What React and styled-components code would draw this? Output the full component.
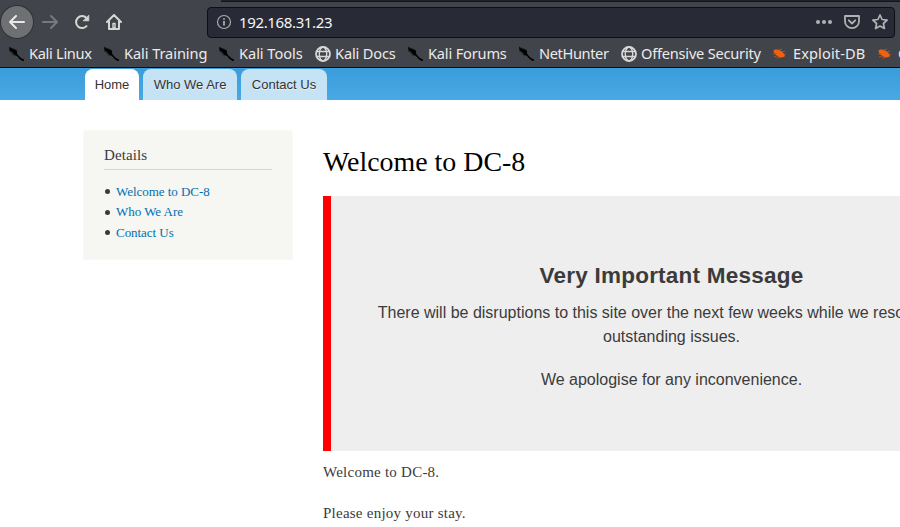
import React from "react";
import styled, { createGlobalStyle } from "styled-components";

const Global = createGlobalStyle`
  * { box-sizing: border-box; }
  html, body { margin: 0; height: 527px; overflow: hidden; background: #fff; }
`;

const Page = styled.div`
  width: 900px;
  height: 527px;
  overflow: hidden;
  background: #fff;
  color: #3b3b3b;
  font-family: "Liberation Serif", serif;
`;

const Chrome = styled.div`
  height: 68px;
  background: #42444b;
  border-bottom: 1px solid #0c0c0d;
  font-family: "Noto Sans", sans-serif;
  color: #ecebe9;
`;

const TabStrip = styled.div`
  height: 2px;
  margin-left: 221px;
  background: #20212b;
  border-bottom: 1px solid #15161c;
`;

const NavRow = styled.div`
  display: flex;
  height: 40px;
  padding: 0 5px 0 1px;
  align-items: center;
`;

const BackButton = styled.div`
  display: grid;
  place-items: center;
  width: 32px;
  height: 32px;
  border-radius: 50%;
  background: #6f7073;
  box-shadow: 0 0 0 1px #303136;
`;

const NavButton = styled.div`
  display: grid;
  place-items: center;
  width: 32px;
  height: 32px;
  padding-left: 2px;
`;

const UrlBar = styled.div`
  display: flex;
  align-items: center;
  width: 688px;
  height: 31px;
  margin-left: auto;
  padding: 0 6px 0 8px;
  background: #282a36;
  border: 1px solid #0e0f13;
  border-radius: 4px;
`;

const Address = styled.span`
  margin: 0 auto 0 7px;
  color: #f6f6f4;
  font-size: 15px;
  letter-spacing: -0.36px;
  line-height: 20px;
`;

const UrlActions = styled.div`
  display: flex;
  gap: 12px;
`;

const Bookmarks = styled.div`
  display: flex;
  height: 25px;
  padding: 0 0 1px 8px;
  overflow: hidden;
`;

const Bookmark = styled.div`
  display: flex;
  flex: 0 0 ${(p) => p.$w}px;
  align-items: center;
  gap: ${(p) => 5 - p.$inset}px;
  padding-left: ${(p) => p.$inset}px;
  white-space: nowrap;
  svg { flex: none; }
`;

const BookmarkLabel = styled.span`
  font-size: 14.6px;
  line-height: 20px;
  margin-top: -3px;
  letter-spacing: ${(p) => p.$track}px;
`;

const SiteHeader = styled.div`
  display: flex;
  align-items: flex-end;
  gap: 4px;
  height: 32px;
  padding-left: 85px;
  background: linear-gradient(#3a9cda, #48a9e4);
`;

const SiteTab = styled.div`
  width: ${(p) => p.$w}px;
  height: 31px;
  border-radius: 8px 8px 0 0;
  background: ${(p) => (p.$active ? "#fff" : "#c6e3f5")};
  color: #333;
  font: 13px/31px "Liberation Sans", sans-serif;
  text-align: center;
  text-shadow: ${(p) => (p.$active ? "none" : "0 1px #eee")};
`;

const Columns = styled.div`
  display: flex;
  gap: 30px;
  align-items: flex-start;
  padding: 30px 0 0 83px;
`;

const Sidebar = styled.div`
  flex: 0 0 210px;
  height: 130px;
  padding: 15px 20px 0;
  background: #f6f6f2;
  border: 1px solid #f9f9f6;
`;

const SideTitle = styled.h2`
  margin: 0 0 11.7px;
  height: 24px;
  border-bottom: 1px solid #d6d6d6;
  font-size: 15px;
  font-weight: 400;
  line-height: 18px;
  letter-spacing: 0.1px;
`;

const SideList = styled.ul`
  margin: 0;
  padding: 0;
  list-style: none;
`;

const SideItem = styled.li`
  display: flex;
  align-items: center;
  gap: 6px;
  height: 20.5px;
  padding-left: 1px;
  color: #0071b3;
  font-size: 13px;
  line-height: 20px;
  letter-spacing: -0.04px;
  &::before {
    content: "";
    width: 5px;
    height: 5px;
    border-radius: 50%;
    background: #3b3b3b;
  }
`;

const Main = styled.div`
  flex: 0 0 689px;
`;

const Title = styled.h1`
  margin: 14px 0 17px;
  color: #000;
  font-size: 27.9px;
  font-weight: 400;
  line-height: 35px;
`;

const Message = styled.div`
  height: 255px;
  padding: 66px 40px 0;
  background: #eee;
  border-left: 8px solid #f00;
  font-family: "Liberation Sans", sans-serif;
  text-align: center;
`;

const MessageTitle = styled.h2`
  margin: 0 0 11px;
  font-size: 22.5px;
  line-height: 28px;
  letter-spacing: 0.24px;
`;

const MessageText = styled.p`
  margin: 0 0 19px;
  font-size: 16px;
  line-height: 24px;
  white-space: nowrap;
`;

const LeadLine = styled.span`
  padding-left: 3px;
`;

const Body = styled.p`
  margin: 10px 0 19px;
  font-size: 15px;
  line-height: 22px;
  letter-spacing: 0.24px;
`;

const Line = ({ size = 16, color = "#d6d6d4", width = 2, children }) => (
  <svg width={size} height={size} viewBox="0 0 16 16" fill="none" stroke={color}
    strokeWidth={width} strokeLinecap="round" strokeLinejoin="round">{children}</svg>
);

const Dragon = () => (
  <svg width="16" height="16" viewBox="0 0 16 16">
    <path d="m1 .4 1.600 1.700L6 3.200l2.500 1.300.7 1.200-.4 1.300 1.400 2.200 2.800 2.700 3 1.600.6 1.700-2.600-.5-3-2.200-2-2.600-3-1.200L4.300 6.300 1.500 4.400Z" fill="#000" />
    <path d="m2 1.500 7 2.500M1 5l4 2.500M3.500 8 7 10" stroke="#000" strokeWidth=".7" opacity=".45" />
  </svg>
);

const Globe = () => (
  <Line width={1.4} color="#d8d8d6">
    <circle cx="8" cy="8" r="7" strokeWidth="1.8" />
    <ellipse cx="8" cy="8" rx="3.7" ry="7" />
    <path d="M1.500 5.500h13M1.500 10.500h13" />
  </Line>
);

const Bug = () => (
  <svg width="16" height="16" viewBox="0 0 16 16">
    <path d="M1.500 4.500C3 2.800 6 3.200 8.500 4.700c2.500 1.300 4.300 3.300 4.500 5.600-2 1.500-5.500 1.500-7.500-.4C3.500 8.800 1.600 7 1.500 4.500Z" fill="#f0620f" />
    <path d="m1 8 4-.5M2 11l4-1.500M5 12.500l3-1.500M7 4l3-1M10 6l3-1M12 8.500l2-.5" stroke="#b85a28" strokeWidth=".8" />
  </svg>
);

const icons = { dragon: Dragon, globe: Globe, bug: Bug };

const bookmarks = [
  { icon: "dragon", label: "Kali Linux", w: 95, track: -0.3 },
  { icon: "dragon", label: "Kali Training", w: 115, track: -0.08 },
  { icon: "dragon", label: "Kali Tools", w: 96, track: -0.04 },
  { icon: "globe", label: "Kali Docs", w: 93, track: -0.15 },
  { icon: "dragon", label: "Kali Forums", w: 111, track: -0.18 },
  { icon: "dragon", label: "NetHunter", w: 102, track: -0.38 },
  { icon: "globe", label: "Offensive Security", w: 152, track: -0.22 },
  { icon: "bug", label: "Exploit-DB", w: 105, track: 0.1 },
  { icon: "bug", label: "GHDB", w: 70, track: 0 },
];

export default function App() {
  return (
    <Page>
      <Global />
      <Chrome>
        <TabStrip />
        <NavRow>
          <BackButton><Line color="#e8e8e6"><path d="M1 8h14M7 2 1 8l6 6" /></Line></BackButton>
          <NavButton><Line color="#77797e"><path d="M1 8h14M9 2l6 6-6 6" /></Line></NavButton>
          <NavButton>
            <Line>
              <path d="M13 11.500A6 6 0 1 1 12.500 4" strokeLinecap="butt" />
              <path d="M14.800 1.500v5.300H9.500Z" fill="#d6d6d4" strokeWidth=".8" />
            </Line>
          </NavButton>
          <NavButton>
            <Line>
              <path d="M1 8 8 1l7 7M3 7.500V15h10V7.500" />
              <path d="M7 9.500h2v4.300H7z" strokeWidth="1.400" />
            </Line>
          </NavButton>
          <UrlBar>
            <Line color="#a9aaad" width={1.2}>
              <circle cx="8" cy="8" r="6.500" />
              <path d="M8 7v4.500M8 4.200v1.600" strokeWidth="1.800" strokeLinecap="butt" />
            </Line>
            <Address>192.168.31.23</Address>
            <UrlActions>
              <Line color="#b1b2b5" width={0}>
                <g fill="#b1b2b5"><circle cx="2" cy="8" r="2" /><circle cx="8" cy="8" r="2" /><circle cx="14" cy="8" r="2" /></g>
              </Line>
              <Line color="#b1b2b5" width={1.8}>
                <path d="M1 2h14v5.300a7 6.900 0 0 1-14 0ZM4.800 6.300 8 9.500l3.200-3.200" />
              </Line>
              <Line color="#b1b2b5" width={1.7}>
                <path d="m8 1 2.100 4.500 5 .6-3.700 3.400 1 5L8 12l-4.400 2.500 1-5L.9 6.100l5-.6Z" />
              </Line>
            </UrlActions>
          </UrlBar>
        </NavRow>
        <Bookmarks>
          {bookmarks.map(({ icon, label, w, track }) => {
            const Icon = icons[icon];
            return (
              <Bookmark key={label} $w={w} $inset={icon === "globe" ? 1 : 0}>
                <Icon />
                <BookmarkLabel $track={track}>{label}</BookmarkLabel>
              </Bookmark>
            );
          })}
        </Bookmarks>
      </Chrome>
      <SiteHeader>
        <SiteTab $w={54} $active>Home</SiteTab>
        <SiteTab $w={94}>Who We Are</SiteTab>
        <SiteTab $w={86}>Contact Us</SiteTab>
      </SiteHeader>
      <Columns>
        <Sidebar>
          <SideTitle>Details</SideTitle>
          <SideList>
            <SideItem>Welcome to DC-8</SideItem>
            <SideItem>Who We Are</SideItem>
            <SideItem>Contact Us</SideItem>
          </SideList>
        </Sidebar>
        <Main>
          <Title>Welcome to DC-8</Title>
          <Message>
            <MessageTitle>Very Important Message</MessageTitle>
            <MessageText>
              <LeadLine>There will be disruptions to this site over the next few weeks while we resolve some</LeadLine><br />
              outstanding issues.
            </MessageText>
            <MessageText>We apologise for any inconvenience.</MessageText>
          </Message>
          <Body>Welcome to DC-8.</Body>
          <Body>Please enjoy your stay.</Body>
        </Main>
      </Columns>
    </Page>
  );
}
